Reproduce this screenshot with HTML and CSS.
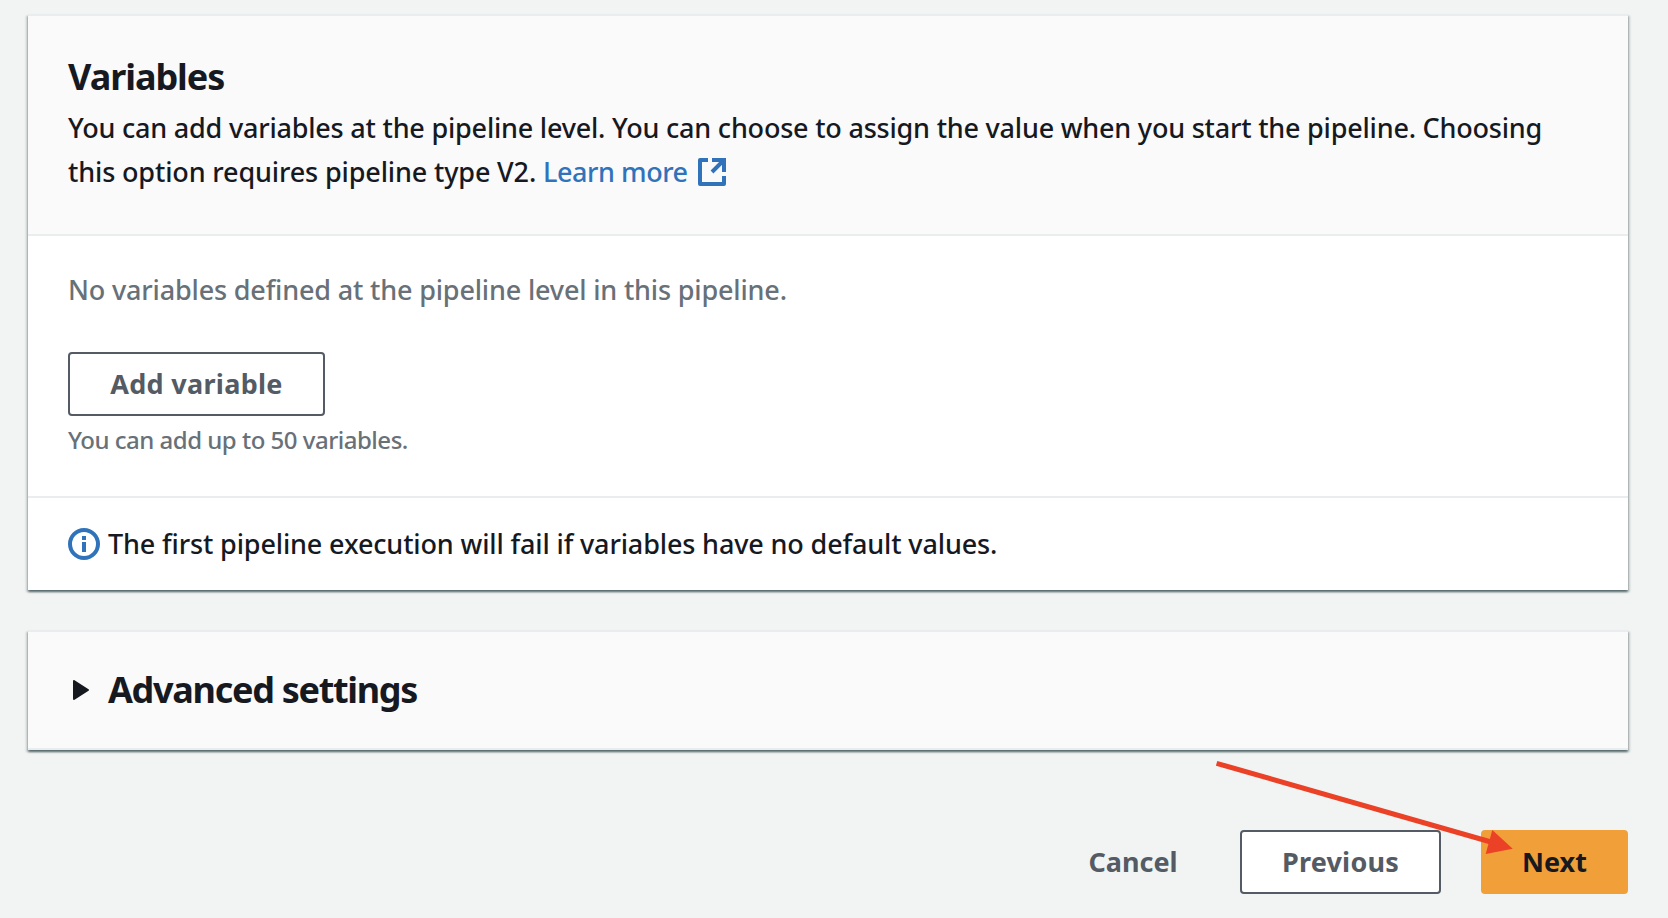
FILE: index.html
```html
<!DOCTYPE html>
<html lang="en">
<head>
<meta charset="utf-8">
<title>Pipeline settings</title>
<link rel="stylesheet" href="styles.css">
</head>
<body>
<main class="page">
  <section class="card">
    <header class="card-header">
      <h2 class="title title-variables">Variables</h2>
      <p class="description"><span class="line-one">You can add variables at the pipeline level. You can choose to assign the value when you start the pipeline. Choosing</span><br><span class="line-two">this option requires pipeline type V2. </span><a class="link" href="#">Learn more</a><svg class="external" viewBox="0 0 28 28" fill="none" stroke="currentColor" stroke-width="4"><path d="M10 2H2v24h24v-8" stroke-linejoin="round"/><path d="M14 2h12v12M25 3 14 14"/></svg></p>
    </header>
    <div class="card-body">
      <p class="empty">No variables defined at the pipeline level in this pipeline.</p>
      <button class="button add" type="button"><span>Add variable</span></button>
      <p class="hint">You can add up to 50 variables.</p>
    </div>
    <footer class="card-footer">
      <svg class="info" viewBox="0 0 32 32"><circle cx="16" cy="16" r="14" fill="none" stroke="currentColor" stroke-width="4"/><path fill="currentColor" d="M14 8h4v4h-4zM14 14h4v10h-4z"/></svg>
      <span class="notice">The first pipeline execution will fail if variables have no default values.</span>
    </footer>
  </section>
  <section class="card advanced">
    <svg class="caret" viewBox="0 0 16 20"><path d="M1 1v18l14-9z" fill="currentColor" stroke="currentColor" stroke-width="2" stroke-linejoin="round"/></svg>
    <h2 class="title title-advanced">Advanced settings</h2>
  </section>
  <div class="actions">
    <button class="button cancel" type="button"><span>Cancel</span></button>
    <button class="button previous" type="button"><span>Previous</span></button>
    <button class="button next" type="button"><span>Next</span></button>
  </div>
  <svg class="pointer" viewBox="0 0 300 94"><path d="M2.600 3.300 277 82" stroke="#eb4126" stroke-width="5" fill="none"/><path d="M278.300 70 298.700 88.700 271.700 94z" fill="#eb4126"/></svg>
</main>
</body>
</html>
```

FILE: styles.css
```css
* { box-sizing: border-box; }
body { margin: 0; background: #f2f4f3; color: #16191f; font-family: "Noto Sans", "Open Sans", sans-serif; font-size: 27px; font-weight: 500; font-variant-ligatures: common-ligatures; }
h2, p { margin: 0; }
.page { position: relative; width: 1668px; height: 918px; padding: 14px 40px 0 28px; overflow: hidden; }
.card { background: #fff; border-top: 2px solid #eaeded; box-shadow: 0 2px 2px 0 rgba(0, 28, 36, .5), 2px 2px 2px 0 rgba(0, 28, 36, .15), -2px 2px 2px 0 rgba(0, 28, 36, .15); }
.card-header { height: 220px; padding: 36px 40px 0; background: #fafafa; border-bottom: 2px solid #eaeded; }
.title { font-size: 36px; line-height: 50px; font-weight: 700; letter-spacing: -1.05px; white-space: nowrap; }
.title-advanced { letter-spacing: -1.3px; }
.description { margin-top: 4px; line-height: 44px; white-space: nowrap; }
.line-one { letter-spacing: -.21px; }
.line-two { letter-spacing: -.14px; }
.link { color: #3073ba; text-decoration: none; letter-spacing: -.45px; }
.external { width: 28px; height: 28px; margin-left: 10px; color: #3073ba; vertical-align: -4px; }
.card-body { height: 260px; padding: 32px 40px 0; }
.empty { line-height: 44px; letter-spacing: -.17px; color: #687078; white-space: nowrap; }
.button { display: flex; align-items: center; justify-content: center; height: 64px; padding: 0 0 2px; border: 2px solid #545b64; border-radius: 4px; background: #fff; color: #545b64; font: inherit; font-weight: 700; white-space: nowrap; }
.add { width: 257px; margin-top: 40px; letter-spacing: .3px; }
.hint { margin-top: 8px; font-size: 24px; line-height: 32px; letter-spacing: -.5px; color: #687078; }
.card-footer { display: flex; align-items: center; gap: 8px; height: 94px; padding: 0 40px; border-top: 2px solid #eaeded; white-space: nowrap; }
.info { width: 32px; height: 32px; color: #3073ba; }
.notice { padding-bottom: 2px; letter-spacing: -.14px; }
.advanced { display: flex; align-items: center; gap: 19px; height: 120px; margin-top: 40px; padding-left: 45px; background: #fafafa; border-bottom: 2px solid #eaeded; }
.caret { width: 16px; height: 20px; }
.actions { display: flex; justify-content: flex-end; gap: 40px; margin-top: 80px; }
.cancel { width: 168px; margin-right: -17px; border-color: transparent; background: transparent; }
.previous { width: 201px; letter-spacing: .2px; }
.next { width: 147px; border-color: #f19f38; background: #f19f38; color: #16191f; }
.pointer { position: absolute; left: 1214px; top: 760px; width: 300px; height: 94px; }
```
